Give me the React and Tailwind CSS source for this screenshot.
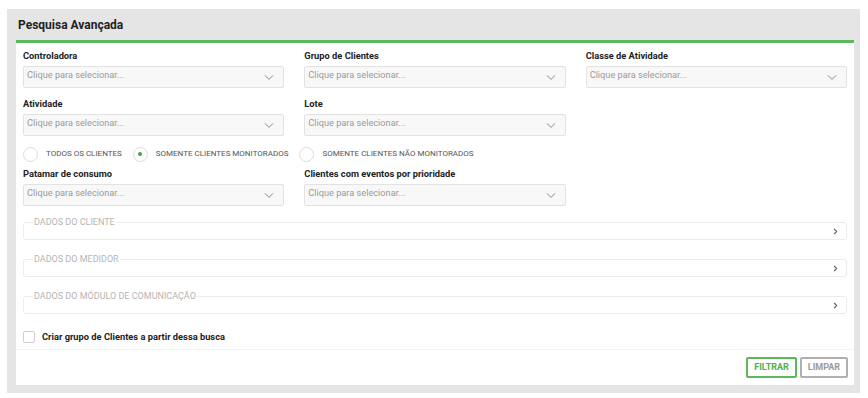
import { ChevronDown, ChevronRight } from "lucide-react";

const Select = ({ label }) => (
  <div className="flex flex-col">
    <span className="text-[9.3px] font-bold leading-[16px] text-[#222]">{label}</span>
    <div className="mt-[2px] h-[22px] flex items-start justify-between rounded-[2px] border border-[#e2e2e2] bg-[#f8f8f8] pl-[3px] pr-[6px]">
      <span className="text-[9.2px] leading-[13px] mt-[1px] text-[#9a9a9a]">Clique para selecionar...</span>
      <ChevronDown className="mt-[3px] w-[16px] h-[15px] text-[#555]" strokeWidth={1.1} />
    </div>
  </div>
);

const Radio = ({ label, checked }) => (
  <label className="flex items-center gap-2">
    <span className="w-[15px] h-[15px] rounded-full border border-[#dcdcdc] bg-white flex items-center justify-center">
      {checked && <span className="w-[4px] h-[4px] rounded-full bg-[#43a047]" />}
    </span>
    <span className="text-[8px] text-[#555] uppercase">{label}</span>
  </label>
);

const Section = ({ title }) => (
  <fieldset className="border border-[#ececec] rounded-[3px] pl-[9px] pr-[6px]">
    <legend className="px-[1px] text-[9px] leading-[12px] text-[#b5b5b5] uppercase">{title}</legend>
    <div className="h-[16px] -mt-[5px] flex justify-end items-center">
      <ChevronRight className="w-[9px] h-[9px] text-[#666]" strokeWidth={3} />
    </div>
  </fieldset>
);

export default function App() {
  return (
    <div className="w-[868px] h-[398px] bg-white pt-[9px] pl-[7px]" style={{ fontFamily: "Roboto, 'Liberation Sans', sans-serif" }}>
      <div className="w-[853px] h-[384px] bg-[#e5e5e5] pl-[9px] pr-[6px] pb-[8px] flex flex-col">
        <div className="h-[31px] flex items-center pl-[2px]">
          <h1 className="text-[12px] font-bold text-[#222]">Pesquisa Avançada</h1>
        </div>
        <div className="flex-1 bg-white border-t-[3px] border-[#5cb85c] flex flex-col">
          <div className="px-[7px] pt-[5px]">
            <div className="grid grid-cols-3 gap-x-[20px] gap-y-[8px]">
              <Select label="Controladora" />
              <Select label="Grupo de Clientes" />
              <Select label="Classe de Atividade" />
              <Select label="Atividade" />
              <Select label="Lote" />
            </div>
            <div className="flex items-center gap-[11px] mt-[10px] h-[16px]">
              <Radio label="Todos os clientes" />
              <Radio label="Somente clientes monitorados" checked />
              <Radio label="Somente clientes não monitorados" />
            </div>
            <div className="grid grid-cols-3 gap-x-[20px] mt-[4px]">
              <Select label="Patamar de consumo" />
              <Select label="Clientes com eventos por prioridade" />
            </div>
            <div className="flex flex-col gap-[13px] mt-[10px]">
              <Section title="Dados do cliente" />
              <Section title="Dados do medidor" />
              <Section title="Dados do módulo de comunicação" />
            </div>
            <label className="flex items-center gap-[7px] mt-[16px] h-[13px]">
              <span className="w-[12px] h-[12px] rounded-[2px] border border-[#cfcfcf] bg-white" />
              <span className="text-[9.3px] font-bold text-[#222]">Criar grupo de Clientes a partir dessa busca</span>
            </label>
          </div>
          <div className="mt-[6px] border-t border-[#f2f2f2] flex justify-end gap-[3px] px-[6px] pt-[7px]">
            <button className="h-[21px] w-[51px] rounded-[2px] border-2 border-[#5cb85c] text-[9px] font-bold text-[#4caf50]">FILTRAR</button>
            <button className="h-[21px] w-[48px] rounded-[2px] border-2 border-[#b0b0b0] text-[9px] font-bold text-[#9a9a9a]">LIMPAR</button>
          </div>
        </div>
      </div>
    </div>
  );
}
